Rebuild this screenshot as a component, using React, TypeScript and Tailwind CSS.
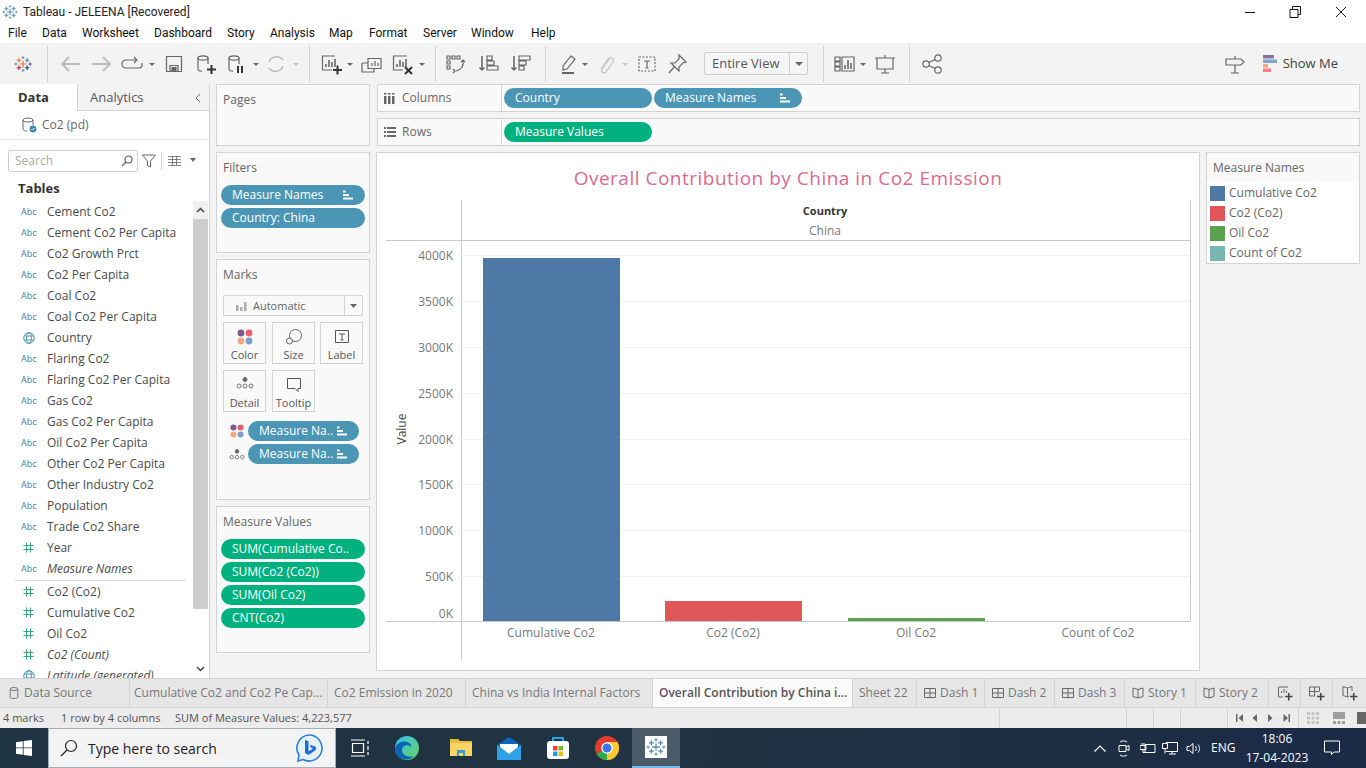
import type { ReactNode } from 'react'

const FIELDS: { t: string; k: 'abc' | 'num' | 'geo'; i?: boolean }[] = [
  { t: 'Cement Co2', k: 'abc' },
  { t: 'Cement Co2 Per Capita', k: 'abc' },
  { t: 'Co2 Growth Prct', k: 'abc' },
  { t: 'Co2 Per Capita', k: 'abc' },
  { t: 'Coal Co2', k: 'abc' },
  { t: 'Coal Co2 Per Capita', k: 'abc' },
  { t: 'Country', k: 'geo' },
  { t: 'Flaring Co2', k: 'abc' },
  { t: 'Flaring Co2 Per Capita', k: 'abc' },
  { t: 'Gas Co2', k: 'abc' },
  { t: 'Gas Co2 Per Capita', k: 'abc' },
  { t: 'Oil Co2 Per Capita', k: 'abc' },
  { t: 'Other Co2 Per Capita', k: 'abc' },
  { t: 'Other Industry Co2', k: 'abc' },
  { t: 'Population', k: 'abc' },
  { t: 'Trade Co2 Share', k: 'abc' },
  { t: 'Year', k: 'num' },
  { t: 'Measure Names', k: 'abc', i: true },
]

const MEASURES: { t: string; k: 'abc' | 'num' | 'geo'; i?: boolean }[] = [
  { t: 'Co2 (Co2)', k: 'num' },
  { t: 'Cumulative Co2', k: 'num' },
  { t: 'Oil Co2', k: 'num' },
  { t: 'Co2 (Count)', k: 'num', i: true },
  { t: 'Latitude (generated)', k: 'geo', i: true },
]

const MENU = [
  { t: 'File', c: 'w-[34px]' },
  { t: 'Data', c: 'w-[40px]' },
  { t: 'Worksheet', c: 'w-[72px]' },
  { t: 'Dashboard', c: 'w-[73px]' },
  { t: 'Story', c: 'w-[43px]' },
  { t: 'Analysis', c: 'w-[59px]' },
  { t: 'Map', c: 'w-[40px]' },
  { t: 'Format', c: 'w-[54px]' },
  { t: 'Server', c: 'w-[48px]' },
  { t: 'Window', c: 'w-[60px]' },
  { t: 'Help', c: 'w-[40px]' },
]

const TICKS = [
  { l: '4000K', y: 255 },
  { l: '3500K', y: 301 },
  { l: '3000K', y: 347 },
  { l: '2500K', y: 393 },
  { l: '2000K', y: 439 },
  { l: '1500K', y: 484 },
  { l: '1000K', y: 530 },
  { l: '500K', y: 576 },
]

const LEGEND = [
  { t: 'Cumulative Co2', c: 'bg-[#4e79a7]' },
  { t: 'Co2 (Co2)', c: 'bg-[#e15759]' },
  { t: 'Oil Co2', c: 'bg-[#59a14f]' },
  { t: 'Count of Co2', c: 'bg-[#76b7b2]' },
]

function Ic({ className = '', w = 24, h = 24, children }: { className?: string; w?: number; h?: number; children: ReactNode }) {
  return (
    <svg width={w} height={h} viewBox={`0 0 ${w} ${h}`} fill="none" stroke="#666" strokeWidth="1.2" className={`shrink-0 ${className}`}>
      {children}
    </svg>
  )
}

function Caret({ className = '', off }: { className?: string; off?: boolean }) {
  return (
    <svg width="8" height="24" viewBox="0 0 8 24" className={`shrink-0 ${className}`}>
      <path d="M1 11h6l-3 3z" fill={off ? '#c4c4c4' : '#666'} />
    </svg>
  )
}

function Sep({ className = '' }: { className?: string }) {
  return <div className={`h-[36px] w-px shrink-0 bg-[#d3d3d3] ${className}`} />
}

function Cross({ x, y, r, c, sw = 1.6 }: { x: number; y: number; r: number; c: string; sw?: number }) {
  return <path d={`M${x - r} ${y}h${r * 2}M${x} ${y - r}v${r * 2}`} stroke={c} strokeWidth={sw} fill="none" />
}

function TableauLogo({ mono }: { mono?: boolean }) {
  const a = mono ? '#5a8fb5' : '#e8762d'
  const b = mono ? '#5a8fb5' : '#5b87a8'
  const c = mono ? '#5a8fb5' : '#c72037'
  const d = mono ? '#5a8fb5' : '#1f447b'
  return (
    <>
      <Cross x={12} y={12} r={4.5} c={a} />
      <Cross x={6.5} y={7} r={3} c={a} />
      <Cross x={17.5} y={7} r={3} c={b} />
      <Cross x={6.5} y={17} r={3} c={c} />
      <Cross x={17.5} y={17} r={3} c={d} />
      <Cross x={12} y={3.5} r={2} c={b} sw={1.2} />
      <Cross x={12} y={20.5} r={2} c={b} sw={1.2} />
      <Cross x={2.5} y={12} r={2} c={b} sw={1.2} />
      <Cross x={21.5} y={12} r={2} c={d} sw={1.2} />
    </>
  )
}

function SortMark() {
  return (
    <svg width="10" height="10" viewBox="0 0 10 10" className="shrink-0">
      <path d="M0 0.5h2.5v2H0zM0 4h6v2H0zM0 7.5h10v2H0z" fill="#fff" />
    </svg>
  )
}

function Pill({ t, sort, green, className = '' }: { t: string; sort?: boolean; green?: boolean; className?: string }) {
  return (
    <div
      className={`flex h-[20px] shrink-0 items-center justify-between rounded-full pl-[11px] pr-[12px] text-[12px] leading-none text-white ${
        green ? 'bg-[#00b180]' : 'bg-[#4b96b4]'
      } ${className}`}
    >
      <span className="whitespace-nowrap">{t}</span>
      {sort && <SortMark />}
    </div>
  )
}

function Shelf({ title, className = '', children }: { title: string; className?: string; children?: ReactNode }) {
  return (
    <section className={`border border-[#d3d3d3] bg-[#f9f9f9] ${className}`}>
      <div className="pl-[6px] pt-[8px] text-[12px] leading-[14px] text-[#666]">{title}</div>
      {children}
    </section>
  )
}

function FieldIcon({ k }: { k: 'abc' | 'num' | 'geo' }) {
  if (k === 'abc') {
    return <span className="w-[32px] pl-[21px] text-[9px] leading-none whitespace-nowrap text-[#3f7f9f]">Abc</span>
  }
  return (
    <span className="flex w-[47px] shrink-0 items-center pl-[23px]">
      {k === 'num' ? (
        <svg width="11" height="11" viewBox="0 0 11 11" stroke="#3fa37c" strokeWidth="1" fill="none">
          <path d="M3.5 0.5v10M7.5 0.5v10M0.5 3.5h10M0.5 7.5h10" />
        </svg>
      ) : (
        <svg width="12" height="12" viewBox="0 0 12 12" stroke="#3f8fa8" strokeWidth="0.9" fill="none">
          <circle cx="6" cy="6" r="5.3" />
          <ellipse cx="6" cy="6" rx="2.4" ry="5.3" />
          <path d="M1 4h10M1 8h10" />
        </svg>
      )}
    </span>
  )
}

function Field({ t, k, i }: { t: string; k: 'abc' | 'num' | 'geo'; i?: boolean }) {
  return (
    <div className="flex h-[21px] shrink-0 items-center">
      {k === 'abc' ? (
        <span className="flex w-[47px] shrink-0 items-center">
          <FieldIcon k={k} />
        </span>
      ) : (
        <FieldIcon k={k} />
      )}
      <span className={`whitespace-nowrap text-[12px] text-[#4a4a4a] ${i ? 'italic' : ''}`}>{t}</span>
    </div>
  )
}

function DbIcon({ className = '', children }: { className?: string; children?: ReactNode }) {
  return (
    <Ic className={className}>
      <ellipse cx="10" cy="6" rx="5" ry="2.2" />
      <path d="M5 6v11c0 1.4 2 2.2 4 2.2M15 6v6" />
      {children}
    </Ic>
  )
}

function MarkBtn({ label, children, className = '' }: { label: string; children: ReactNode; className?: string }) {
  return (
    <div className={`flex h-[42px] w-[43px] flex-col items-center border border-[#d3d3d3] bg-[#f9f9f9] pt-[5px] ${className}`}>
      <div className="h-[20px]">{children}</div>
      <span className="text-[11px] leading-[14px] text-[#555]">{label}</span>
    </div>
  )
}

function ColorDots({ s = 18 }: { s?: number }) {
  return (
    <svg width={s} height={s} viewBox="0 0 18 18">
      <circle cx="5" cy="5" r="3.4" fill="#7b5d8f" />
      <circle cx="13" cy="5" r="3.4" fill="#ee5c70" />
      <circle cx="5" cy="13" r="3.4" fill="#f0a878" />
      <circle cx="13" cy="13" r="3.4" fill="#7b9fcb" />
    </svg>
  )
}

function DetailDots() {
  return (
    <svg width="18" height="14" viewBox="0 0 18 14" stroke="#666" strokeWidth="0.9" fill="none">
      <circle cx="9" cy="3.5" r="2" fill="#666" />
      <circle cx="3" cy="10" r="2" />
      <circle cx="9" cy="10" r="2" />
      <circle cx="15" cy="10" r="2" />
    </svg>
  )
}

function Toolbar() {
  return (
    <div className="flex h-[41px] shrink-0 items-center bg-[#f3f3f3]">
      <Ic className="ml-[11px]">
        <g transform="translate(3 3) scale(0.75)">
          <TableauLogo />
        </g>
      </Ic>
      <Sep className="ml-[12px]" />
      <Ic className="ml-[10px]">
        <path d="M22 12H4M11 5l-7 7 7 7" stroke="#bdbdbd" strokeWidth="2" />
      </Ic>
      <Ic className="ml-[8px]">
        <path d="M2 12h18M13 5l7 7-7 7" stroke="#bdbdbd" strokeWidth="2" />
      </Ic>
      <Ic className="ml-[6px]">
        <path d="M16 8H6a4 4 0 0 0 0 8h13a3 3 0 0 0 3-3v-2M14 5l3 3-3 3" />
      </Ic>
      <Caret className="ml-[4px]" />
      <Ic className="ml-[6px]">
        <path d="M4.5 4.5h15v15h-15zM8 19.5v-6h8v6" />
        <path d="M10 15.5h4v4h-4z" fill="#666" />
      </Ic>
      <DbIcon className="ml-[7px]">
        <path d="M14 19.5h9M18.5 15v9" stroke="#333" strokeWidth="2" transform="translate(0 -2)" />
      </DbIcon>
      <DbIcon className="ml-[7px]">
        <path d="M14 14v7M18 14v7" stroke="#333" strokeWidth="2" />
      </DbIcon>
      <Caret className="ml-[4px]" />
      <Ic className="ml-[4px]">
        <path d="M5 10a8 8 0 0 1 14-2M19 14a8 8 0 0 1-14 2" stroke="#bdbdbd" strokeWidth="1.6" />
      </Ic>
      <Caret className="ml-[4px]" off />
      <Sep className="ml-[9px]" />
      <Ic className="ml-[9px]">
        <path d="M16 4H3.5v14H13" />
        <path d="M7 15v-3M10 15V8M13 15v-5M16 15V7" strokeWidth="1.6" />
        <path d="M14 20h9M18.5 15.5v9" stroke="#333" strokeWidth="2" transform="translate(0 -2)" />
      </Ic>
      <Caret className="ml-[3px]" />
      <Ic className="ml-[5px]">
        <path d="M9 6.5h13v10H9zM3 11h6M3 11v9h12v-3" />
        <path d="M13 14v-3M16 14V9M19 14v-3" />
      </Ic>
      <Ic className="ml-[7px]">
        <path d="M17 4H3.5v14H13" />
        <path d="M7 15v-3M10 15V8M13 15v-5M16 15V7" strokeWidth="1.6" />
        <path d="M15 15l7 7M22 15l-7 7" stroke="#333" strokeWidth="2" />
      </Ic>
      <Caret className="ml-[4px]" />
      <Sep className="ml-[9px]" />
      <Ic className="ml-[8px]">
        <path d="M3 4h3v3H3zM8 4h3v3H8zM13 4h3v3h-3zM3 9h3v3H3zM3 14h3v3H3z" />
        <path d="M19 9c1 5-2 9-7 10M17 10l2-2 2 2M9 17l2 2-2 2" />
      </Ic>
      <Ic className="ml-[9px]">
        <path d="M5 4v14M2.5 15.5L5 18l2.5-2.5" strokeWidth="1.5" />
        <path d="M10 4h5v4h-5zM10 9h7v4h-7zM10 14h11v4H10z" />
      </Ic>
      <Ic className="ml-[8px]">
        <path d="M5 4v14M2.5 15.5L5 18l2.5-2.5" strokeWidth="1.5" />
        <path d="M10 4h11v4H10zM10 9h7v4h-7zM10 14h5v4h-5z" />
      </Ic>
      <Sep className="ml-[12px]" />
      <Ic className="ml-[10px]">
        <path d="M15 4l4 3-8 10-4 1 0-4z" />
        <path d="M6 21h12" strokeWidth="2" />
      </Ic>
      <Caret className="ml-[1px]" />
      <Ic className="ml-[4px]">
        <path d="M17 6l-8 11c-2 3 2 5 4 3l7-10c2-3-2-6-5-3l-7 10" stroke="#c4c4c4" />
      </Ic>
      <Caret className="ml-[4px]" off />
      <Ic className="ml-[6px]">
        <path d="M4 5h16v14H4z" strokeDasharray="2 1.5" />
        <path d="M9 9h6M12 9v7M10.5 16h3" />
      </Ic>
      <Ic className="ml-[6px]">
        <path d="M14 3l7 7-3 1-4 4 0 4-8-8 4 0 4-4zM9 15l-5 6" />
      </Ic>
      <div className="ml-[15px] flex h-[23px] w-[104px] shrink-0 items-center rounded-[2px] border border-[#cfcfcf] bg-[#f5f5f5]">
        <span className="w-[85px] shrink-0 border-r border-[#d3d3d3] pl-[7px] text-[13px] leading-[21px] text-[#555]">Entire View</span>
        <svg width="10" height="6" viewBox="0 0 10 6" className="ml-[4px]">
          <path d="M1 1h8L5 5z" fill="#666" />
        </svg>
      </div>
      <Sep className="ml-[15px]" />
      <Ic className="ml-[10px]">
        <path d="M1 5h5v4H1zM1 10h5v4H1zM1 15h5v4H1zM8 5h12v14H8z" />
        <path d="M11 17v-4M14 17V8M17 17v-6" strokeWidth="1.6" />
      </Ic>
      <Caret className="ml-[1px]" />
      <Ic className="ml-[6px]">
        <path d="M2 6h20M4 6v11h16V6M12 3v3M12 17v4M8 21h8" />
      </Ic>
      <Sep className="ml-[12px]" />
      <Ic className="ml-[10px]">
        <circle cx="6" cy="12" r="3.2" />
        <circle cx="18" cy="6" r="3.2" />
        <circle cx="18" cy="18" r="3.2" />
        <path d="M9 10.5l6-3M9 13.5l6 3" />
      </Ic>
      <Ic className="ml-auto">
        <path d="M12 4v3M3 7h15l3 3-3 3H3zM12 13v8M8 21h8" />
      </Ic>
      <svg width="15" height="18" viewBox="0 0 15 18" className="ml-[16px] shrink-0">
        <rect x="0" y="0" width="11" height="3.5" fill="#8a7399" />
        <rect x="0" y="4.5" width="14" height="3.5" fill="#7fa6cf" />
        <rect x="0" y="9" width="5" height="3.5" fill="#f5a77c" />
        <rect x="0" y="13.5" width="8" height="3.5" fill="#f87c84" />
      </svg>
      <span className="ml-[5px] mr-[28px] text-[13px] text-[#444]">Show Me</span>
    </div>
  )
}

function Sidebar() {
  return (
    <aside className="flex w-[210px] shrink-0 flex-col overflow-hidden border-r border-[#d3d3d3] bg-white">
      <div className="flex h-[27px] shrink-0">
        <div className="flex w-[77px] items-center pl-[18px] pt-[1px] text-[13px] font-bold text-[#333]">Data</div>
        <div className="flex flex-1 items-center justify-between border-b border-l border-[#d3d3d3] bg-[#f3f3f3] pl-[12px] pr-[7px] pt-[1px] text-[13px] text-[#555]">
          <span>Analytics</span>
          <svg width="8" height="10" viewBox="0 0 8 10" fill="none" stroke="#666">
            <path d="M6 1L2 5l4 4" />
          </svg>
        </div>
      </div>
      <div className="flex h-[29px] shrink-0 items-center border-b border-[#e3e3e3] pl-[22px]">
        <svg width="15" height="16" viewBox="0 0 15 16" fill="none" stroke="#666" strokeWidth="1">
          <ellipse cx="6" cy="3" rx="5" ry="2" />
          <path d="M1 3v9c0 1 2 2 4 2M11 3v5" />
          <circle cx="11" cy="12" r="3.4" fill="#3d85aa" stroke="none" />
          <path d="M9.5 12l1 1 2-2" stroke="#fff" />
        </svg>
        <span className="ml-[5px] text-[12px] text-[#666]">Co2 (pd)</span>
      </div>
      <div className="mt-[9px] flex h-[23px] shrink-0 items-center pl-[8px]">
        <div className="flex h-[22px] w-[130px] items-center justify-between rounded-[2px] border border-[#cfcfcf] pl-[6px] pr-[4px]">
          <span className="text-[12px] text-[#a8a8a8]">Search</span>
          <svg width="12" height="12" viewBox="0 0 12 12" fill="none" stroke="#555" strokeWidth="1.1">
            <circle cx="7.5" cy="4.5" r="3.5" />
            <path d="M5 7l-4 4" />
          </svg>
        </div>
        <svg width="14" height="14" viewBox="0 0 14 14" fill="none" stroke="#666" className="ml-[4px]">
          <path d="M0.5 1h13L8.5 7v6l-3-1.5V7z" />
        </svg>
        <div className="ml-[5px] h-[18px] w-px bg-[#d3d3d3]" />
        <svg width="13" height="10" viewBox="0 0 13 10" fill="none" stroke="#666" className="ml-[6px]">
          <path d="M0 .5h13M0 3.5h13M0 6.5h13M0 9.500h13M4.500 0v10M8.500 0v10" strokeWidth="0.8" />
        </svg>
        <svg width="8" height="5" viewBox="0 0 8 5" className="ml-[8px]">
          <path d="M1 0h6L4 4z" fill="#666" />
        </svg>
      </div>
      <div className="flex h-[29px] shrink-0 items-center pl-[18px] pt-[4px] text-[13px] font-bold text-[#333]">Tables</div>
      <div className="flex min-h-0 flex-1">
        <div className="flex w-[193px] shrink-0 flex-col overflow-hidden">
          {FIELDS.map((f) => (
            <Field key={f.t} {...f} />
          ))}
          <div className="ml-[15px] mt-[1px] h-px w-[171px] shrink-0 bg-[#d9d9d9]" />
          {MEASURES.map((f) => (
            <Field key={f.t} {...f} />
          ))}
        </div>
        <div className="flex w-[15px] shrink-0 flex-col">
          <div className="flex h-[18px] shrink-0 items-center justify-center bg-[#f0f0f0]">
            <svg width="9" height="6" viewBox="0 0 9 6" fill="none" stroke="#444" strokeWidth="1.5">
              <path d="M1 5l3.5-3.5L8 5" />
            </svg>
          </div>
          <div className="h-[390px] shrink-0 bg-[#cdcdcd]" />
          <div className="flex flex-1 items-end justify-center pb-[6px]">
            <svg width="9" height="6" viewBox="0 0 9 6" fill="none" stroke="#444" strokeWidth="1.5">
              <path d="M1 1l3.5 3.5L8 1" />
            </svg>
          </div>
        </div>
      </div>
    </aside>
  )
}

function ShelvesColumn() {
  return (
    <div className="ml-[6px] flex w-[154px] shrink-0 flex-col">
      <Shelf title="Pages" className="h-[62px] shrink-0" />
      <Shelf title="Filters" className="mt-[6px] flex h-[101px] shrink-0 flex-col">
        <div className="mt-[10px] flex flex-col gap-[3px] pl-[4px]">
          <Pill t="Measure Names" sort className="w-[144px]" />
          <Pill t="Country: China" className="w-[144px]" />
        </div>
      </Shelf>
      <Shelf title="Marks" className="mt-[6px] h-[241px] shrink-0">
        <div className="ml-[6px] mt-[13px] flex h-[21px] w-[140px] items-center rounded-[1px] border border-[#d3d3d3] bg-[#f9f9f9]">
          <svg width="12" height="10" viewBox="0 0 12 10" className="ml-[12px]">
            <path d="M0 4h2.5v6H0zM4 6h2.5v4H4zM8 1h2.5v9H8z" fill="#aaa" />
          </svg>
          <span className="ml-[5px] w-[92px] border-r border-[#d3d3d3] text-[11px] leading-[19px] text-[#666]">Automatic</span>
          <svg width="7" height="4" viewBox="0 0 7 4" className="ml-[5px]">
            <path d="M0 0h7L3.500 4z" fill="#666" />
          </svg>
        </div>
        <div className="ml-[6px] mt-[6px] grid w-[140px] grid-cols-[43px_42px_43px] gap-x-[6px] gap-y-[6px]">
          <MarkBtn label="Color">
            <ColorDots />
          </MarkBtn>
          <MarkBtn label="Size" className="w-[42px]">
            <svg width="18" height="18" viewBox="0 0 18 18" fill="none" stroke="#666">
              <circle cx="10.5" cy="7.5" r="6" />
              <circle cx="4.5" cy="13" r="3" fill="#f9f9f9" />
            </svg>
          </MarkBtn>
          <MarkBtn label="Label">
            <svg width="18" height="18" viewBox="0 0 18 18" fill="none" stroke="#555">
              <path d="M2.5 2.5h13v12h-13zM6 6h6M9 6v6M7.5 12h3" />
            </svg>
          </MarkBtn>
          <MarkBtn label="Detail">
            <DetailDots />
          </MarkBtn>
          <MarkBtn label="Tooltip" className="w-[42px]">
            <svg width="18" height="18" viewBox="0 0 18 18" fill="none" stroke="#555">
              <path d="M2.5 2.5h13v10h-2.5v3l-3-3h-7.500z" />
            </svg>
          </MarkBtn>
        </div>
        <div className="mt-[9px] flex flex-col gap-[3px]">
          <div className="flex items-center pl-[12px]">
            <ColorDots s={16} />
            <Pill t="Measure Na.." sort className="ml-[3px] w-[111px]" />
          </div>
          <div className="flex items-center pl-[12px]">
            <div className="w-[16px]">
              <svg width="16" height="13" viewBox="0 0 18 14" stroke="#666" strokeWidth="0.9" fill="none">
                <circle cx="9" cy="3.5" r="2" fill="#666" />
                <circle cx="3" cy="10" r="2" />
                <circle cx="9" cy="10" r="2" />
                <circle cx="15" cy="10" r="2" />
              </svg>
            </div>
            <Pill t="Measure Na.." sort className="ml-[3px] w-[111px]" />
          </div>
        </div>
      </Shelf>
      <Shelf title="Measure Values" className="mt-[6px] h-[147px] shrink-0">
        <div className="mt-[10px] flex flex-col gap-[3px] pl-[4px]">
          <Pill t="SUM(Cumulative Co.." green className="w-[144px]" />
          <Pill t="SUM(Co2 (Co2))" green className="w-[144px]" />
          <Pill t="SUM(Oil Co2)" green className="w-[144px]" />
          <Pill t="CNT(Co2)" green className="w-[144px]" />
        </div>
      </Shelf>
    </div>
  )
}

function ShelfRow({ label, icon, children }: { label: string; icon: ReactNode; children: ReactNode }) {
  return (
    <div className="flex h-[28px] shrink-0 items-center border border-[#d3d3d3] bg-[#f9f9f9]">
      <div className="flex h-full w-[124px] shrink-0 items-center border-r border-[#d3d3d3] pl-[6px]">
        <span className="flex w-[18px] items-center">{icon}</span>
        <span className="text-[12px] text-[#666]">{label}</span>
      </div>
      <div className="flex gap-[2px] pl-[2px]">{children}</div>
    </div>
  )
}

function Chart() {
  const txt = 'fill-[#777] text-[12px]'
  return (
    <svg viewBox="377 200 822 470" className="h-[470px] w-[822px] shrink-0">
      <path d="M461.500 200v460M1190.500 200v421M386 240.500h804M386 621.500h804" stroke="#c8c8c8" fill="none" />
      {TICKS.map((t) => (
        <g key={t.l}>
          <path d={`M461 ${t.y + 0.5}h729`} stroke="#efefef" />
          <text x="453" y={t.y + 5} textAnchor="end" className={txt}>
            {t.l}
          </text>
        </g>
      ))}
      <text x="453" y="618" textAnchor="end" className={txt}>
        0K
      </text>
      <rect x="483" y="258" width="137" height="363" fill="#4e79a7" />
      <rect x="665" y="601" width="137" height="20" fill="#e15759" />
      <rect x="848" y="618" width="137" height="3" fill="#59a14f" />
      <text x="825" y="215" textAnchor="middle" className="fill-[#333] text-[11px] font-bold">
        Country
      </text>
      <text x="825" y="235" textAnchor="middle" className={txt}>
        China
      </text>
      <text x="551" y="637" textAnchor="middle" className={txt}>
        Cumulative Co2
      </text>
      <text x="733" y="637" textAnchor="middle" className={txt}>
        Co2 (Co2)
      </text>
      <text x="916" y="637" textAnchor="middle" className={txt}>
        Oil Co2
      </text>
      <text x="1098" y="637" textAnchor="middle" className={txt}>
        Count of Co2
      </text>
      <text x="406" y="429" textAnchor="middle" transform="rotate(-90 406 429)" className="fill-[#444] text-[12px]">
        Value
      </text>
    </svg>
  )
}

function Workspace() {
  return (
    <div className="ml-[7px] mr-[6px] flex min-w-0 flex-1 flex-col">
      <ShelfRow
        label="Columns"
        icon={
          <svg width="11" height="11" viewBox="0 0 11 11">
            <path d="M0 3h2.500v8H0zM4 3h2.500v8H4zM8 3h2.500v8H8zM0 0h2.500v1.500H0zM4 0h2.500v1.500H4zM8 0h2.500v1.500H8z" fill="#666" />
          </svg>
        }
      >
        <Pill t="Country" className="w-[148px]" />
        <Pill t="Measure Names" sort className="w-[148px]" />
      </ShelfRow>
      <div className="mt-[6px]">
        <ShelfRow
          label="Rows"
          icon={
            <svg width="12" height="10" viewBox="0 0 12 10">
              <path d="M0 0h2v2H0zM0 4h2v2H0zM0 8h2v2H0zM3 0h9v2H3zM3 4h9v2H3zM3 8h9v2H3z" fill="#666" />
            </svg>
          }
        >
          <Pill t="Measure Values" green className="w-[148px]" />
        </ShelfRow>
      </div>
      <div className="mt-[6px] flex items-start">
        <div className="-ml-px flex h-[519px] w-[824px] shrink-0 flex-col border border-[#d3d3d3] bg-white">
          <div className="flex h-[47px] shrink-0 items-center justify-center pt-[4px] text-[19px] tracking-[0.5px] text-[#dc6a8f]">
            Overall Contribution by China in Co2 Emission
          </div>
          <Chart />
        </div>
        <div className="ml-[6px] h-[112px] flex-1 border border-[#d3d3d3] bg-white">
          <div className="flex h-[29px] items-center bg-[#f9f9f9] pl-[6px] text-[12px] text-[#666]">Measure Names</div>
          <div className="flex flex-col pl-[3px] pt-[1px]">
            {LEGEND.map((l) => (
              <div key={l.t} className="flex h-[20px] items-center">
                <span className={`h-[15px] w-[15px] ${l.c}`} />
                <span className="ml-[4px] text-[12px] text-[#666]">{l.t}</span>
              </div>
            ))}
          </div>
        </div>
      </div>
    </div>
  )
}

function Tab({ className, active, icon, t }: { className: string; active?: boolean; icon?: ReactNode; t?: string }) {
  return (
    <div
      className={`flex h-full shrink-0 items-center gap-[4px] whitespace-nowrap border-r border-[#d3d3d3] text-[12px] ${
        active ? 'bg-[#fafafa] font-semibold text-[#555]' : 'text-[#777]'
      } ${className}`}
    >
      {icon}
      {t}
    </div>
  )
}

const dashIcon = (
  <svg width="12" height="12" viewBox="0 0 12 12" fill="none" stroke="#666">
    <path d="M.5 1.500h11v9H.5zM6 1.500v9M.5 6h11" />
  </svg>
)

const storyIcon = (
  <svg width="12" height="12" viewBox="0 0 12 12" fill="none" stroke="#666">
    <path d="M6 2.500L1 1v8.500l5 1.500 5-1.500V1zM6 2.500V11" />
  </svg>
)

function AddTab({ className, children }: { className: string; children: ReactNode }) {
  return (
    <div className={`flex h-full shrink-0 items-center justify-center border-r border-[#d3d3d3] ${className}`}>
      <svg width="16" height="16" viewBox="0 0 16 16" fill="none" stroke="#666">
        {children}
        <path d="M8 12.500h7.500M11.750 9v7.500" stroke="#444" strokeWidth="1.600" transform="translate(0 -1)" />
      </svg>
    </div>
  )
}

function Tabs() {
  return (
    <div className="flex h-[30px] shrink-0 border-y border-[#d3d3d3] bg-[#e6e6e6]">
      <Tab
        className="w-[130px] pl-[9px]"
        t="Data Source"
        icon={
          <svg width="10" height="12" viewBox="0 0 10 12" fill="none" stroke="#777" className="mr-[1px]">
            <ellipse cx="5" cy="2" rx="3.800" ry="1.500" />
            <path d="M1.200 2v8c0 1 1.600 1.500 3.800 1.500S8.800 11 8.800 10V2" />
          </svg>
        }
      />
      <Tab className="w-[198px] pl-[4px]" t="Cumulative Co2 and Co2 Pe Cap..." />
      <Tab className="w-[138px] pl-[6px]" t="Co2 Emission in 2020" />
      <Tab className="w-[187px] pl-[6px]" t="China vs India Internal Factors" />
      <Tab className="w-[200px] pl-[6px]" t="Overall Contribution by China i..." active />
      <Tab className="w-[64px] pl-[6px]" t="Sheet 22" />
      <Tab className="w-[68px] pl-[7px]" t="Dash 1" icon={dashIcon} />
      <Tab className="w-[70px] pl-[7px]" t="Dash 2" icon={dashIcon} />
      <Tab className="w-[70px] pl-[7px]" t="Dash 3" icon={dashIcon} />
      <Tab className="w-[71px] pl-[7px]" t="Story 1" icon={storyIcon} />
      <Tab className="w-[73px] pl-[7px]" t="Story 2" icon={storyIcon} />
      <AddTab className="w-[32px]">
        <path d="M11 2H1.500v10H6M4.500 8V6M7 8V4M9.500 8V5.500" />
      </AddTab>
      <AddTab className="w-[32px]">
        <path d="M.5 2h10v4M.5 2v9H6M5.500 2v9M.5 6.500h10" />
      </AddTab>
      <AddTab className="w-[33px] border-r-0">
        <path d="M5.500 3L1 1.500v9l4.500 1.500L7 11.500M5.500 3L10 1.500V6M5.500 3v9" />
      </AddTab>
    </div>
  )
}

function StatusBar() {
  return (
    <div className="flex h-[20px] shrink-0 items-center bg-[#ececec] text-[11px] text-[#555]">
      <span className="w-[58px] shrink-0 pl-[3px]">4 marks</span>
      <span className="ml-[3px] w-[114px] shrink-0">1 row by 4 columns</span>
      <span className="w-[824px] shrink-0">SUM of Measure Values: 4,223,577</span>
      <div className="h-full w-[127px] shrink-0 border-l border-[#d3d3d3]" />
      <div className="h-full w-[27px] shrink-0 border-l border-[#d3d3d3]" />
      <div className="h-full w-[27px] shrink-0 border-l border-[#d3d3d3]" />
      <div className="h-full w-[47px] shrink-0 border-l border-[#d3d3d3]" />
      <div className="flex h-full w-[71px] shrink-0 items-center border-l border-[#d3d3d3] pl-[8px]">
        <svg width="56" height="10" viewBox="0 0 56 10" fill="#666">
          <path d="M0 1h1.500v8H0zM7 1v8L2.500 5zM21 1v8l-4.500-4zM32 1v8l4.500-4zM47.500 1v8L52 5zM52.500 1H54v8h-1.500z" />
        </svg>
      </div>
      <div className="flex h-full flex-1 items-center gap-[10px] border-l border-[#d3d3d3] pl-[8px]">
        <svg width="12" height="12" viewBox="0 0 12 12" fill="#c4c4c4">
          <path d="M0 0h3v3H0zM4.500 0h3v3h-3zM9 0h3v3H9zM0 4.500h3v3H0zM4.500 4.500h3v3h-3zM9 4.500h3v3H9zM0 9h3v3H0zM4.500 9h3v3h-3zM9 9h3v3H9z" />
        </svg>
        <svg width="12" height="12" viewBox="0 0 12 12" fill="#9e9e9e" className="ml-[4px]">
          <path d="M0 0h12v7H0zM0 9h3v3H0zM4.500 9h3v3h-3zM9 9h3v3H9z" />
        </svg>
        <div className="ml-[2px] h-[12px] w-[11px] bg-[#666]" />
      </div>
    </div>
  )
}

function Taskbar() {
  return (
    <div className="flex h-[40px] shrink-0 items-center bg-gradient-to-r from-[#1f3442] via-[#1f3342] to-[#1b2a46]">
      <div className="flex w-[48px] shrink-0 justify-center">
        <svg width="16" height="16" viewBox="0 0 16 16" fill="#fff">
          <path d="M0 2.200l6.800-1v6.300H0zM7.600 1.100L16 0v7.500H7.600zM0 8.300h6.800v6.400l-6.800-1zM7.600 8.300H16V16l-8.400-1.100z" />
        </svg>
      </div>
      <div className="flex h-full w-[288px] shrink-0 items-center border border-[#a8adb1] bg-[#f3f3f3] pl-[11px]">
        <svg width="18" height="18" viewBox="0 0 18 18" fill="none" stroke="#222" strokeWidth="1.200">
          <circle cx="11" cy="7" r="5.500" />
          <path d="M7 11l-6 6" />
        </svg>
        <span className="ml-[10px] text-[14px] text-[#222]">Type here to search</span>
        <svg width="30" height="30" viewBox="0 0 30 30" className="ml-[77px]">
          <path d="M15 2a13 13 0 1 1-6 24.500L4 28l1-6A13 13 0 0 1 15 2z" fill="#e6f2fb" stroke="#2c7fd6" strokeWidth="1.600" />
          <path d="M11 7l3.500 1.200v10l4.500-2.500-2-1-1.200-3 6 2v3.300L14.500 22 11 20z" fill="#1f6fd0" />
        </svg>
      </div>
      <svg width="20" height="18" viewBox="0 0 20 18" fill="none" stroke="#fff" strokeWidth="1.200" className="ml-[14px]">
        <path d="M1 1h14M1 17h14M2.500 4.500h11v9h-11zM18 2v3M18 7v4M18 13v3" />
      </svg>
      <svg width="26" height="26" viewBox="0 0 26 26" className="ml-[24px]">
        <defs>
          <linearGradient id="edgeA" x1="0" y1="0" x2="1" y2="1">
            <stop offset="0" stopColor="#35c1f1" />
            <stop offset="1" stopColor="#66d35c" />
          </linearGradient>
        </defs>
        <circle cx="13" cy="13" r="12" fill="url(#edgeA)" />
        <path d="M1 14c1-6 7-9 12-7 3 1 5 3 4 5-3-3-9-2-9 3s6 8 12 6c-4 4-8 4-11 3C4 23 1 19 1 14z" fill="#0c63b5" />
      </svg>
      <svg width="22" height="20" viewBox="0 0 22 20" className="ml-[30px]">
        <path d="M0 1h8l2 2h12v15H0z" fill="#f0b93d" />
        <path d="M0 5h22v13H0z" fill="#fad566" />
        <path d="M7 12h8v6h-2v-3H9v3H7z" fill="#3a96dd" />
      </svg>
      <svg width="24" height="23" viewBox="0 0 24 23" className="ml-[25px]">
        <path d="M12 0l12 8v15H0V8z" fill="#0a66b8" />
        <path d="M0 8l12 9 12-9v15H0z" fill="#2ea2e8" />
        <path d="M3 7h18v3l-9 7-9-7z" fill="#fff" />
      </svg>
      <svg width="24" height="24" viewBox="0 0 24 24" className="ml-[25px]">
        <path d="M7 5V2h10v3" fill="none" stroke="#29a5e6" strokeWidth="2" />
        <rect x="1" y="5" width="22" height="18" rx="3" fill="#fff" />
        <path d="M7 10h4.500v4.500H7z" fill="#e8442f" />
        <path d="M12.500 10H17v4.500h-4.500z" fill="#7cb82f" />
        <path d="M7 15.500h4.500V20H7z" fill="#1ba1e2" />
        <path d="M12.500 15.500H17V20h-4.500z" fill="#fbbb1b" />
      </svg>
      <svg width="24" height="24" viewBox="0 0 24 24" className="ml-[25px]">
        <circle cx="12" cy="12" r="12" fill="#e33b2e" />
        <path d="M12 12L1.600 18A12 12 0 0 0 14 23.800z" fill="#2da94f" />
        <path d="M12 6h10.400A12 12 0 0 1 12 24z" fill="#fcc934" />
        <circle cx="12" cy="12" r="5.800" fill="#fff" />
        <circle cx="12" cy="12" r="4.500" fill="#3b78e7" />
      </svg>
      <div className="ml-[13px] flex h-full w-[48px] shrink-0 items-center justify-center border-b-2 border-[#76b9ed] bg-[#4b5b68]">
        <div className="flex h-[22px] w-[22px] items-center justify-center bg-white">
          <svg width="20" height="20" viewBox="0 0 24 24">
            <TableauLogo mono />
          </svg>
        </div>
      </div>
      <svg width="12" height="7" viewBox="0 0 12 7" fill="none" stroke="#fff" strokeWidth="1.200" className="ml-[414px]">
        <path d="M.5 6.500L6 1l5.500 5.500" />
      </svg>
      <svg width="12" height="18" viewBox="0 0 12 18" fill="none" stroke="#fff" className="ml-[12px]">
        <path d="M1 6.500h7v6H1zM8 8l3-1.500v5L8 10M2 3c2-1.500 5-1.500 7 0M2 16c2 1.500 5 1.500 7 0" />
      </svg>
      <svg width="16" height="12" viewBox="0 0 16 12" fill="none" stroke="#fff" className="ml-[10px]">
        <path d="M5 2.500h10v8H5zM0 3.500h6v4H0zM2 1v2.500M4 1v2.500M3 7.500v3h3" />
      </svg>
      <svg width="16" height="14" viewBox="0 0 16 14" fill="none" stroke="#fff" className="ml-[6px]">
        <path d="M4 1.500h11.500v9H4M.5 2.500h5v5h-5zM3 7.500v5M7 13h7M10 10.500V13" />
      </svg>
      <svg width="16" height="13" viewBox="0 0 16 13" fill="none" stroke="#fff" className="ml-[8px]">
        <path d="M1 4.500h2.500L7 1.500v10L3.500 8.500H1zM9.500 4c1 1.500 1 3.500 0 5M12 2.500c2 2.500 2 5.500 0 8" />
      </svg>
      <span className="ml-[9px] w-[24px] text-[12px] text-white">ENG</span>
      <div className="ml-[12px] flex w-[60px] flex-col items-center text-[12px] leading-[19px] text-white">
        <span>18:06</span>
        <span className="whitespace-nowrap">17-04-2023</span>
      </div>
      <svg width="16" height="16" viewBox="0 0 16 16" fill="none" stroke="#fff" className="ml-[17px]">
        <path d="M.5 1h15v11H10l-2.500 2.500V12H.5z" />
      </svg>
    </div>
  )
}

export default function App() {
  return (
    <div className="flex h-[768px] w-[1366px] flex-col overflow-hidden bg-[#f3f3f3] font-['Open_Sans',sans-serif]">
      <div className="flex h-[22px] shrink-0 items-center bg-white pt-[1px] font-['Roboto',sans-serif]">
        <svg width="16" height="16" viewBox="0 0 24 24" className="ml-[2px]">
          <TableauLogo mono />
        </svg>
        <span className="ml-[5px] text-[12px] text-[#222]">Tableau - JELEENA [Recovered]</span>
        <svg width="12" height="12" viewBox="0 0 12 12" fill="none" stroke="#111" className="ml-auto">
          <path d="M1 6.500h10" />
        </svg>
        <svg width="12" height="12" viewBox="0 0 12 12" fill="none" stroke="#111" className="ml-[33px]">
          <path d="M1 3.500h8v8H1zM3.500 3V.5h8v8H9" />
        </svg>
        <svg width="12" height="12" viewBox="0 0 12 12" fill="none" stroke="#111" className="ml-[34px] mr-[19px]">
          <path d="M1 1l10 10M11 1L1 11" />
        </svg>
      </div>
      <div className="flex h-[21px] shrink-0 items-center bg-white pl-[8px] font-['Roboto',sans-serif]">
        {MENU.map((m) => (
          <span key={m.t} className={`text-[12px] text-[#111] ${m.c}`}>
            {m.t}
          </span>
        ))}
      </div>
      <Toolbar />
      <main className="flex h-[594px] shrink-0">
        <Sidebar />
        <ShelvesColumn />
        <Workspace />
      </main>
      <Tabs />
      <StatusBar />
      <Taskbar />
    </div>
  )
}
